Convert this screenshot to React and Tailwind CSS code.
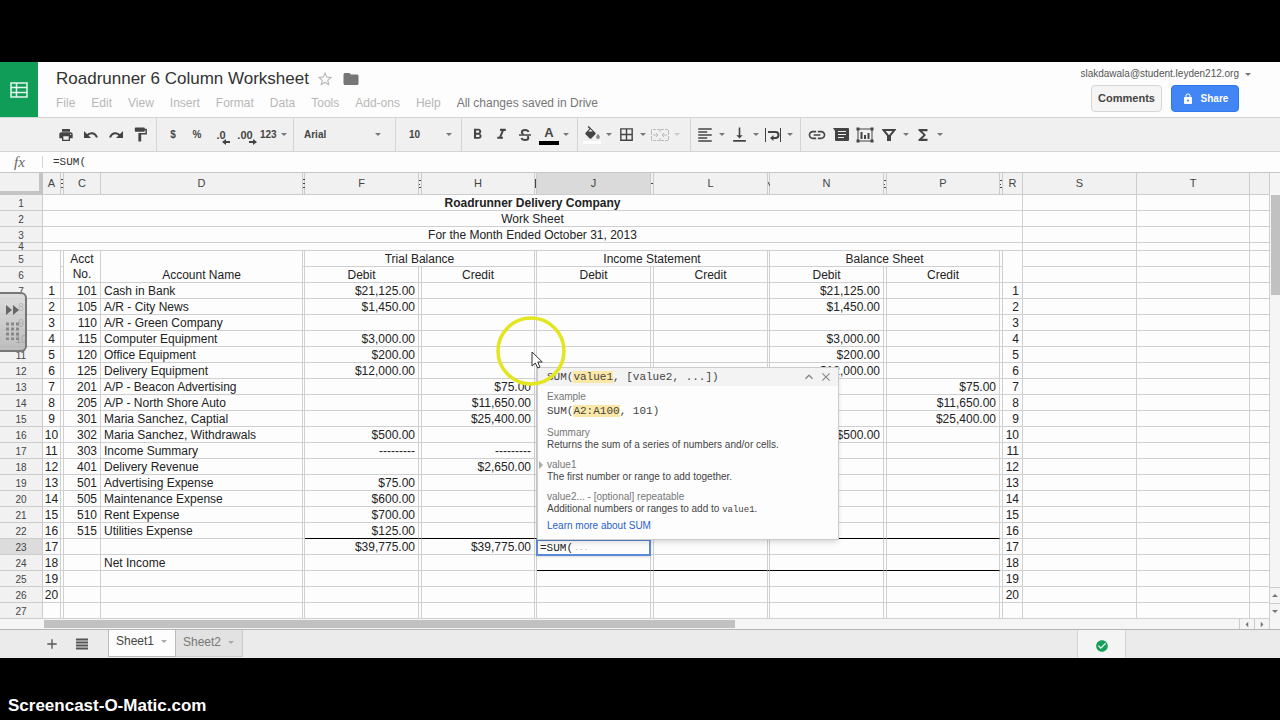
import clsx from 'clsx';
import {
  MdPrint,
  MdFormatPaint,
  MdFormatBold,
  MdFormatItalic,
  MdBorderAll,
  MdFormatAlignLeft,
  MdVerticalAlignBottom,
  MdLink,
  MdFunctions,
  MdStarBorder,
  MdFolder,
  MdLock,
  MdCheckCircle,
  MdAdd,
  MdClose,
  MdKeyboardArrowUp,
} from 'react-icons/md';

const MENUS = ['File', 'Edit', 'View', 'Insert', 'Format', 'Data', 'Tools', 'Add-ons', 'Help'];

// narrow columns are too thin for a letter, only a sliver of it is drawn
const COLUMNS = [
  { id: 'A', width: 'w-[18px]', cell: 'text-center' },
  { id: 'B', width: 'w-[3px]', sliver: 'M0 .5h2M0 4.500h2M0 8.500h2' },
  { id: 'C', width: 'w-[37px]', cell: 'text-right pr-[3px]' },
  { id: 'D', width: 'w-[202px]', cell: 'text-left pl-[3px]' },
  { id: 'E', width: 'w-[2px]', sliver: 'M0 .5h2M0 4.500h2M0 8.500h2' },
  { id: 'F', width: 'w-[114px]', cell: 'text-right pr-[3px]' },
  { id: 'G', width: 'w-[3px]', sliver: 'M0 1.500h2M0 5.500h1M0 8.500h2' },
  { id: 'H', width: 'w-[113px]', cell: 'text-right pr-[3px]' },
  { id: 'I', width: 'w-[2px]', sliver: 'M.5 0v9' },
  { id: 'J', width: 'w-[114px]', cell: 'text-right pr-[3px]' },
  { id: 'K', width: 'w-[3px]', sliver: 'M0 4.500h2' },
  { id: 'L', width: 'w-[114px]', cell: 'text-right pr-[3px]' },
  { id: 'M', width: 'w-[2px]', sliver: 'M0 3l2 4' },
  { id: 'N', width: 'w-[114px]', cell: 'text-right pr-[3px]' },
  { id: 'O', width: 'w-[3px]', sliver: 'M0 1.500h2M0 5.500h1M0 8.500h2' },
  { id: 'P', width: 'w-[113px]', cell: 'text-right pr-[3px]' },
  { id: 'Q', width: 'w-[3px]', sliver: 'M0 1.500h2M0 5.500h1M0 8.500h2' },
  { id: 'R', width: 'w-[20px]', cell: 'text-right pr-[3px]' },
  { id: 'S', width: 'w-[114px]' },
  { id: 'T', width: 'w-[113px]' },
  { id: '', width: 'w-auto' },
];

const ROWS = [
  { n: 7, A: 1, C: 101, D: 'Cash in Bank', F: '$21,125.00', N: '$21,125.00', R: 1 },
  { n: 8, A: 2, C: 105, D: 'A/R - City News', F: '$1,450.00', N: '$1,450.00', R: 2 },
  { n: 9, A: 3, C: 110, D: 'A/R - Green Company', R: 3 },
  { n: 10, A: 4, C: 115, D: 'Computer Equipment', F: '$3,000.00', N: '$3,000.00', R: 4 },
  { n: 11, A: 5, C: 120, D: 'Office Equipment', F: '$200.00', N: '$200.00', R: 5 },
  { n: 12, A: 6, C: 125, D: 'Delivery Equipment', F: '$12,000.00', N: '$12,000.00', R: 6 },
  { n: 13, A: 7, C: 201, D: 'A/P - Beacon Advertising', H: '$75.00', P: '$75.00', R: 7 },
  { n: 14, A: 8, C: 205, D: 'A/P - North Shore Auto', H: '$11,650.00', P: '$11,650.00', R: 8 },
  { n: 15, A: 9, C: 301, D: 'Maria Sanchez, Captial', H: '$25,400.00', P: '$25,400.00', R: 9 },
  { n: 16, A: 10, C: 302, D: 'Maria Sanchez, Withdrawals', F: '$500.00', N: '$500.00', R: 10 },
  { n: 17, A: 11, C: 303, D: 'Income Summary', F: '---------', H: '---------', R: 11 },
  { n: 18, A: 12, C: 401, D: 'Delivery Revenue', H: '$2,650.00', R: 12 },
  { n: 19, A: 13, C: 501, D: 'Advertising Expense', F: '$75.00', R: 13 },
  { n: 20, A: 14, C: 505, D: 'Maintenance Expense', F: '$600.00', R: 14 },
  { n: 21, A: 15, C: 510, D: 'Rent Expense', F: '$700.00', R: 15 },
  { n: 22, A: 16, C: 515, D: 'Utilities Expense', F: '$125.00', R: 16 },
  { n: 23, A: 17, F: '$39,775.00', H: '$39,775.00', R: 17 },
  { n: 24, A: 18, D: 'Net Income', R: 18 },
  { n: 25, A: 19, R: 19 },
  { n: 26, A: 20, R: 20 },
  { n: 27 },
];

// last row of a block gets a heavy rule under these columns
const RULES = { 22: 'FGHIJKLMNOP', 24: 'JKLMNOP' };

function Caret({ className = 'text-[#777]' }) {
  return (
    <svg viewBox="0 0 6 3" className={clsx('w-[6px] h-[3px] shrink-0', className)} aria-hidden="true">
      <path d="M0 0h6L3 3z" fill="currentColor" />
    </svg>
  );
}

function ToolButton({ label, width = 'w-6', caret = false, faded = false, children }) {
  return (
    <button
      type="button"
      aria-label={label}
      className={clsx('flex h-full items-center', caret ? 'w-[34px]' : width, faded && 'opacity-30')}
    >
      <span className={clsx('flex justify-center', caret ? 'w-6' : 'w-full')}>{children}</span>
      {caret && (
        <span className="flex w-[10px] justify-center">
          <Caret />
        </span>
      )}
    </button>
  );
}

function Group({ className, last, children }) {
  return (
    <div className={clsx('flex h-full items-center', !last && 'border-r border-[#d4d4d4]', className)}>
      {children}
    </div>
  );
}

function UndoIcon({ className }) {
  return (
    <svg viewBox="0 0 14 8" className={clsx('h-2 w-[14px]', className)}>
      <path d="M0 0v7h7z" fill="currentColor" />
      <path d="M3 4.500C6 1 11 1.500 13 6.500" fill="none" stroke="currentColor" strokeWidth="2" />
    </svg>
  );
}

function FillIcon() {
  return (
    <svg viewBox="0 0 24 20" className="h-[15px] w-[18px]" fill="currentColor">
      <path d="M16.560 8.940L7.620 0 6.210 1.410l2.380 2.380-5.150 5.150c-.59.59-.59 1.540 0 2.120l5.500 5.500c.29.29.68.44 1.060.44s.77-.15 1.060-.44l5.500-5.500c.59-.58.59-1.530 0-2.120z" />
      <path d="M8.600 5.800l1.400-1.400 3 3H7z" fill="#f0f0f0" />
      <path d="M20 10.500s-2.500 2.500-2.500 4.200a2.500 2.500 0 0 0 5 0c0-1.700-2.500-4.200-2.500-4.200z" fill="#888" />
    </svg>
  );
}

function MergeIcon() {
  return (
    <svg viewBox="0 0 18 14" className="h-[14px] w-[18px]" fill="none" stroke="currentColor">
      <path d="M.5 4V1.500h17V4M.5 10v2.500h17V10M9 1v3M9 10v3M.5 4v6M17.500 4v6" strokeDasharray="3 1" />
      <path d="M2 7h5M5 5l2 2-2 2M16 7h-5M13 5l-2 2 2 2" />
    </svg>
  );
}

function WrapIcon() {
  return (
    <svg viewBox="0 0 18 14" className="h-[14px] w-[18px]" fill="none" stroke="currentColor">
      <path d="M1.500 0v14M16.500 0v14" />
      <path d="M4 4h7.500a2.800 2.800 0 0 1 0 6H8" strokeWidth="2" />
      <path d="M9.500 7v6L6 10z" fill="currentColor" stroke="none" />
    </svg>
  );
}

function CommentIcon() {
  return (
    <svg viewBox="0 0 16 14" className="h-[14px] w-4">
      <path d="M0 0h15a1 1 0 0 1 1 1v11a1 1 0 0 1-1 1H3a1 1 0 0 1-1-1V3z" fill="currentColor" />
      <path d="M5 3.500h8M5 6.500h8M5 9.500h6" stroke="#f1f1f1" />
    </svg>
  );
}

function ChartIcon() {
  return (
    <svg viewBox="0 0 18 16" className="h-4 w-[18px]">
      <path d="M2 2h14v12H2z" fill="none" stroke="currentColor" />
      <path d="M.5.5h3v3h-3zM14.500.5h3v3h-3zM.5 12.500h3v3h-3zM14.500 12.500h3v3h-3z" fill="currentColor" />
      <path d="M4.500 5h2v7h-2zM8 8h2v4H8zM11.500 6h2v6h-2z" fill="currentColor" />
    </svg>
  );
}

function FilterIcon() {
  return (
    <svg viewBox="0 0 14 12" className="h-3 w-[14px]" fill="none" stroke="currentColor" strokeWidth="2">
      <path d="M1.500 1h11L8 6.500V12H6V6.500z" />
      <path d="M6 6h2v6H6z" fill="currentColor" stroke="none" />
    </svg>
  );
}

function DecimalIcon({ text, right }) {
  return (
    <span className="relative text-[11px] font-bold leading-3">
      {text}
      <svg viewBox="0 0 8 6" className="absolute -bottom-1 -right-1 h-[6px] w-2" fill="currentColor">
        {right ? <path d="M0 2h4V0l4 3-4 3V4H0z" /> : <path d="M8 2H4V0L0 3l4 3V4h4z" />}
      </svg>
    </span>
  );
}

function Header() {
  return (
    <header className="flex h-[55px] bg-[#fdfdfd]">
      <div className="flex w-[38px] shrink-0 items-center justify-center bg-[#0f9d58]">
        <svg viewBox="0 0 18 16" className="h-4 w-[18px]" fill="none" stroke="#e6f5ec" strokeWidth="1.500">
          <path d="M1 1h16v14H1zM1 5.500h16M1 10.500h16M6.500 1v14" />
        </svg>
      </div>
      <div className="flex-1 pl-[18px] pt-[6px]">
        <div className="flex h-[22px] items-center">
          <h1 className="text-[17px] leading-[22px] text-[#333]">Roadrunner 6 Column Worksheet</h1>
          <MdStarBorder className="ml-[7px] size-[18px] text-[#bbb]" />
          <MdFolder className="ml-2 size-[18px] text-[#777]" />
        </div>
        <nav className="mt-1 flex gap-4 text-[12px] leading-[18px] text-[#b7b7b7]">
          {MENUS.map((m) => (
            <button key={m} type="button">{m}</button>
          ))}
          <span className="text-[#777]">All changes saved in Drive</span>
        </nav>
      </div>
      <div className="flex flex-col items-end">
        <button type="button" className="mr-[29px] mt-[6px] flex items-center gap-[6px] text-[10px] leading-3 text-[#555]">
          slakdawala@student.leyden212.org
          <Caret />
        </button>
        <div className="mr-[41px] mt-[5px] flex gap-[9px] font-bold">
          <button type="button" className="h-[27px] w-[71px] rounded-sm border border-[#d6d6d6] bg-[#f5f5f5] text-[11px] text-[#444]">
            Comments
          </button>
          <button type="button" className="flex h-[27px] w-[68px] items-center justify-center gap-[7px] rounded-sm border border-[#3079ed] bg-[#4285f4] text-[10px] text-white">
            <MdLock className="size-3" />
            Share
          </button>
        </div>
      </div>
    </header>
  );
}

function Toolbar() {
  return (
    <div className="flex h-[35px] items-center border-y border-[#d4d4d4] bg-[#f0f0f0] text-[#444]">
      <Group className="pl-[53px] pr-[3px]">
        <ToolButton label="Print" width="w-[25px]"><MdPrint className="size-4" /></ToolButton>
        <ToolButton label="Undo" width="w-[25px]"><UndoIcon /></ToolButton>
        <ToolButton label="Redo" width="w-[25px]"><UndoIcon className="-scale-x-100" /></ToolButton>
        <ToolButton label="Paint format" width="w-[25px]"><MdFormatPaint className="size-[17px]" /></ToolButton>
      </Group>
      <Group className="px-1 text-[10px] font-bold">
        <ToolButton label="Format as currency">$</ToolButton>
        <ToolButton label="Format as percent">%</ToolButton>
        <ToolButton label="Decrease decimal places"><DecimalIcon text=".0" /></ToolButton>
        <ToolButton label="Increase decimal places"><DecimalIcon text=".00" right /></ToolButton>
        <button type="button" className="flex h-full w-8 items-center gap-1 pl-[3px]">
          123
          <Caret />
        </button>
      </Group>
      <Group className="w-[102px] pl-[10px] pr-[14px]">
        <select aria-label="Font" defaultValue="Arial" className="min-w-0 flex-1 appearance-none bg-transparent text-[10px] font-bold outline-none">
          <option>Arial</option>
        </select>
        <Caret />
      </Group>
      <Group className="w-[66px] pl-[13px] pr-[9px]">
        <select aria-label="Font size" defaultValue="10" className="min-w-0 flex-1 appearance-none bg-transparent text-[10px] font-bold outline-none">
          <option>10</option>
        </select>
        <Caret />
      </Group>
      <Group className="pl-[3px] pr-[6px]">
        <ToolButton label="Bold"><MdFormatBold className="size-[17px]" /></ToolButton>
        <ToolButton label="Italic"><MdFormatItalic className="size-[17px]" /></ToolButton>
        <ToolButton label="Strikethrough">
          <svg viewBox="0 0 12 12" className="size-3" fill="none" stroke="currentColor" strokeWidth="2">
            <path d="M9.500 3C9 1.600 7.800 1 6 1 4 1 2.800 2 2.800 3.200c0 1 .6 1.600 1.700 1.900M2.500 9c.5 1.400 1.800 2 3.600 2 2 0 3.200-.9 3.200-2.200 0-.8-.4-1.300-1-1.600" />
            <path d="M0 6h12" strokeWidth="1.500" />
          </svg>
        </ToolButton>
        <ToolButton label="Text color" caret>
          <span className="mt-px w-5 border-b-4 border-black text-center text-[13px] font-bold leading-4">A</span>
        </ToolButton>
      </Group>
      <Group className="pl-[2px] pr-2">
        <ToolButton label="Fill color" caret>
          <span className="mt-px border-b-[3px] border-white"><FillIcon /></span>
        </ToolButton>
        <ToolButton label="Borders" caret><MdBorderAll className="size-[17px]" /></ToolButton>
        <ToolButton label="Merge cells" caret faded><MergeIcon /></ToolButton>
      </Group>
      <Group className="pl-[2px] pr-[5px]">
        <ToolButton label="Horizontal align" caret><MdFormatAlignLeft className="size-[18px]" /></ToolButton>
        <ToolButton label="Vertical align" caret><MdVerticalAlignBottom className="size-[19px]" /></ToolButton>
        <ToolButton label="Text wrapping" caret><WrapIcon /></ToolButton>
      </Group>
      <Group className="pl-1" last>
        <ToolButton label="Insert link"><MdLink className="size-5" /></ToolButton>
        <ToolButton label="Insert comment"><CommentIcon /></ToolButton>
        <ToolButton label="Insert chart"><ChartIcon /></ToolButton>
        <ToolButton label="Filter" caret><FilterIcon /></ToolButton>
        <ToolButton label="Functions" caret><MdFunctions className="size-[18px]" /></ToolButton>
      </Group>
    </div>
  );
}

function FormulaBar() {
  return (
    <label className="flex h-[21px] items-center border-b border-[#c6c6c6] bg-[#fdfdfd]">
      <span className="w-[43px] border-r border-[#d4d4d4] pl-[14px] font-[Liberation_Serif,serif] text-[15px] italic leading-3 text-[#666]">
        fx
      </span>
      <input
        defaultValue="=SUM("
        className="h-full flex-1 bg-transparent pl-[10px] font-[Liberation_Mono,monospace] text-[11px] text-[#333] outline-none"
      />
    </label>
  );
}

function FormulaHelp() {
  return (
    <div className="absolute bottom-full left-0 z-20 -mb-px w-[302px] border border-[#ccc] bg-[#fdfdfd] text-left text-[10px] leading-3 text-[#444] shadow-md">
      <div className="flex h-[18px] items-center bg-[#f3f3f3] pl-[9px] pr-[5px]">
        <code className="flex-1 font-[Liberation_Mono,monospace] text-[11px]">
          SUM(<mark className="bg-[#fce8a6] text-inherit">value1</mark>, [value2, ...])
        </code>
        <button type="button" aria-label="Collapse"><MdKeyboardArrowUp className="size-4 text-[#888]" /></button>
        <button type="button" aria-label="Close" className="ml-[2px]"><MdClose className="size-[14px] text-[#888]" /></button>
      </div>
      <div className="flex flex-col gap-2 pl-[9px] pt-[5px]">
        <div>
          <p className="text-[#777]">Example</p>
          <code className="block font-[Liberation_Mono,monospace] text-[11px] leading-4">
            SUM(<mark className="bg-[#fce8a6] text-inherit">A2:A100</mark>, 101)
          </code>
        </div>
        <div>
          <p className="text-[#777]">Summary</p>
          <p>Returns the sum of a series of numbers and/or cells.</p>
        </div>
        <div className="relative">
          <svg viewBox="0 0 4 8" className="absolute -left-2 top-[2px] h-2 w-1"><path d="M0 0l4 4-4 4z" fill="#aaa" /></svg>
          <p className="text-[#777]">value1</p>
          <p>The first number or range to add together.</p>
        </div>
        <div>
          <p className="text-[#777]">value2... - [optional] repeatable</p>
          <p>
            Additional numbers or ranges to add to{' '}
            <code className="font-[Liberation_Mono,monospace] text-[9px] leading-none">value1</code>.
          </p>
        </div>
      </div>
      <a href="#help" className="ml-[9px] mt-[5px] mb-[7px] block w-fit text-[#2a62c8]">Learn more about SUM</a>
    </div>
  );
}

function ActiveCell() {
  return (
    <>
      <div className="absolute -inset-x-px -bottom-[2px] top-0 z-10 flex items-center border-2 border-[#5a8ad8] bg-[#fdfdfd] pl-[2px] font-[Liberation_Mono,monospace] text-[11px] leading-3 shadow">
        <input aria-label="Cell J23" defaultValue="=SUM(" className="w-[34px] bg-transparent outline-none" />
        <span className="text-[8px] text-[#aaa]">...</span>
      </div>
      <FormulaHelp />
    </>
  );
}

function RowHead({ n, active, short }) {
  return (
    <th
      scope="row"
      className={clsx(
        'border-b border-r border-[#ccc] p-0 text-[10px] font-normal text-[#444]',
        short ? 'leading-[7px]' : 'pt-[2px] leading-[13px]',
        active ? 'bg-[#dcdcdc]' : 'bg-[#f1f1f1]',
      )}
    >
      {n}
    </th>
  );
}

function Cell({ className, short, children, ...rest }) {
  return (
    <td
      className={clsx('border-b border-r border-[#d0d0d0]', !short && 'pt-[2px] leading-[13px]', className)}
      {...rest}
    >
      {children}
    </td>
  );
}

function Blanks({ short }) {
  return (
    <>
      <Cell short={short} />
      <Cell short={short} />
      <Cell short={short} />
    </>
  );
}

function Sheet() {
  return (
    <table className="w-full table-fixed border-separate border-spacing-0 bg-[#fdfdfd] text-[12px] text-[#222]">
      <colgroup>
        <col className="w-[43px]" />
        {COLUMNS.map((c) => <col key={c.id} className={c.width} />)}
      </colgroup>
      <thead>
        <tr className="h-[22px]">
          <td className="border-b-4 border-r-4 border-[#c4c4c4] bg-[#f1f1f1] p-0" />
          {COLUMNS.map((c) => (
            <th
              key={c.id}
              scope="col"
              aria-label={c.id || undefined}
              className={clsx(
                'border-b border-r border-[#ccc] p-0 text-[11px] font-normal leading-[21px] text-[#444]',
                c.id === 'J' ? 'bg-[#dadada]' : 'bg-[#f1f1f1]',
              )}
            >
              {c.sliver ? (
                <svg viewBox="0 0 2 9" className="h-[9px] w-[2px]" stroke="currentColor" aria-hidden="true">
                  <path d={c.sliver} />
                </svg>
              ) : (
                c.id
              )}
            </th>
          ))}
        </tr>
      </thead>
      <tbody>
        <tr className="h-4">
          <RowHead n={1} />
          <Cell colSpan={18} className="text-center font-bold">Roadrunner Delivery Company</Cell>
          <Blanks />
        </tr>
        <tr className="h-4">
          <RowHead n={2} />
          <Cell colSpan={18} className="text-center">Work Sheet</Cell>
          <Blanks />
        </tr>
        <tr className="h-4">
          <RowHead n={3} />
          <Cell colSpan={18} className="text-center">For the Month Ended October 31, 2013</Cell>
          <Blanks />
        </tr>
        <tr className="h-2">
          <RowHead n={4} short />
          <Cell colSpan={18} short />
          <Blanks short />
        </tr>
        <tr className="h-4">
          <RowHead n={5} />
          <Cell rowSpan={2} />
          <Cell />
          <Cell rowSpan={2} short className="pt-px text-center leading-[15px]">Acct<br />No.</Cell>
          <Cell rowSpan={2} className="text-center align-bottom">Account Name</Cell>
          <Cell />
          <Cell colSpan={3} className="text-center">Trial Balance</Cell>
          <Cell />
          <Cell colSpan={3} className="text-center">Income Statement</Cell>
          <Cell />
          <Cell colSpan={3} className="text-center">Balance Sheet</Cell>
          <Cell />
          <Cell rowSpan={2} />
          <Blanks />
        </tr>
        <tr className="h-4">
          <RowHead n={6} />
          <Cell />
          <Cell />
          <Cell className="text-center">Debit</Cell>
          <Cell />
          <Cell className="text-center">Credit</Cell>
          <Cell />
          <Cell className="text-center">Debit</Cell>
          <Cell />
          <Cell className="text-center">Credit</Cell>
          <Cell />
          <Cell className="text-center">Debit</Cell>
          <Cell />
          <Cell className="text-center">Credit</Cell>
          <Cell />
          <Blanks />
        </tr>
        {ROWS.map((row) => (
          <tr key={row.n} className="h-4">
            <RowHead n={row.n} active={row.n === 23} />
            {COLUMNS.map((c) => {
              const active = row.n === 23 && c.id === 'J';
              return (
                <Cell
                  key={c.id}
                  className={clsx(
                    'whitespace-nowrap',
                    c.cell,
                    active && 'relative',
                    c.id && RULES[row.n]?.includes(c.id) && 'border-b-black',
                  )}
                >
                  {active ? <ActiveCell /> : c.id && row[c.id]}
                </Cell>
              );
            })}
          </tr>
        ))}
      </tbody>
    </table>
  );
}

function VerticalScrollbar() {
  return (
    <div className="flex w-[10px] shrink-0 flex-col bg-[#f5f5f5]">
      <div className="mt-[22px] ml-px h-[100px] bg-[#c1c1c1]" />
      <div className="flex-1" />
      <button type="button" aria-label="Scroll up" className="flex h-4 items-center justify-center border-t border-[#ccc]">
        <Caret className="rotate-180 text-[#777]" />
      </button>
      <button type="button" aria-label="Scroll down" className="flex h-4 items-center justify-center border-t border-[#ccc]">
        <Caret />
      </button>
    </div>
  );
}

function HorizontalScrollbar() {
  return (
    <div className="flex h-[10px] bg-[#f5f5f5] pl-[44px] pr-[10px]">
      <div className="my-px w-[691px] bg-[#c1c1c1]" />
      <div className="flex-1" />
      <button type="button" aria-label="Scroll left" className="flex w-[15px] items-center justify-center border-l border-[#ccc]">
        <Caret className="rotate-90 text-[#777]" />
      </button>
      <button type="button" aria-label="Scroll right" className="flex w-4 items-center justify-center border-x border-[#ccc]">
        <Caret className="-rotate-90 text-[#777]" />
      </button>
    </div>
  );
}

function SheetTabs() {
  return (
    <div className="flex h-[29px] border-t border-[#b5b5b5] bg-[#ebebeb] text-[12px] text-[#777]">
      <button type="button" aria-label="Add sheet" className="ml-[44px]"><MdAdd className="size-4 text-[#555]" /></button>
      <button type="button" aria-label="All sheets" className="ml-4">
        <svg viewBox="0 0 12 12" className="h-3 w-3"><path d="M0 1.500h12M0 4.500h12M0 7.500h12M0 10.500h12" stroke="#555" strokeWidth="2" /></svg>
      </button>
      <button type="button" className="ml-5 flex h-[27px] w-[68px] items-center gap-[7px] border-x border-b border-[#bbb] bg-[#fdfdfd] pl-[7px] pb-1 text-[#444]">
        Sheet1
        <Caret className="text-[#aaa]" />
      </button>
      <button type="button" className="flex h-[27px] w-[67px] items-center gap-[7px] border-b border-r border-[#ccc] bg-[#e2e2e2] pl-[7px] pb-[2px]">
        Sheet2
        <Caret className="text-[#aaa]" />
      </button>
      <div className="flex-1" />
      <button type="button" aria-label="Saved" className="mr-[154px] flex w-[49px] items-center justify-center border-x border-[#d4d4d4] bg-[#f4f4f4] pt-1">
        <MdCheckCircle className="size-[14px] text-[#14a05a]" />
      </button>
    </div>
  );
}

// recorder drawer that sticks to the left screen edge
function DrawerHandle() {
  return (
    <button
      type="button"
      aria-label="Open drawer"
      className="absolute left-0 top-[230px] z-30 flex h-[60px] w-[27px] flex-col items-center justify-center gap-[7px] rounded-r-md border-2 border-l-0 border-[#777] bg-linear-to-b from-[#d8d8d8]/80 to-[#b0b0b0]/80"
    >
      <svg viewBox="0 0 13 10" className="h-[10px] w-[13px]"><path d="M0 0l6 5-6 5zM7 0l6 5-6 5z" fill="#666" /></svg>
      <svg viewBox="0 0 13 18" className="h-[18px] w-[13px]" stroke="#888" strokeWidth="3" strokeDasharray="3 2">
        <path d="M0 2h13M0 7h13M0 12h13M0 17h13" />
      </svg>
    </button>
  );
}

function Pointer() {
  return (
    <svg viewBox="0 0 70 70" className="pointer-events-none absolute left-[496px] top-[254px] z-30 size-[70px]" fill="none">
      <circle cx="35" cy="35" r="33" stroke="#e3e61e" strokeWidth="3.500" />
      <path d="M36 36v14l3.300-3 2.400 5 2.300-1-2.300-5h4.600z" fill="#fff" stroke="#333" />
    </svg>
  );
}

export default function App() {
  return (
    <div className="min-h-screen bg-black pt-[62px] font-[Liberation_Sans,Arial,sans-serif]">
      <main className="relative">
        <Header />
        <Toolbar />
        <FormulaBar />
        <div className="flex">
          <div className="min-w-0 flex-1"><Sheet /></div>
          <VerticalScrollbar />
        </div>
        <HorizontalScrollbar />
        <SheetTabs />
        <DrawerHandle />
        <Pointer />
      </main>
      <footer className="pl-2 pt-[37px] text-[17px] font-bold leading-[22px] text-white">Screencast-O-Matic.com</footer>
    </div>
  );
}
